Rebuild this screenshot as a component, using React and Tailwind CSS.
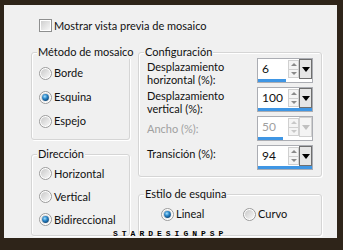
import React from "react";

function Radio({ checked }) {
  return (
    <svg width="13" height="13" viewBox="0 0 13 13" className="shrink-0">
      <defs>
        <linearGradient id="rg" x1="0" y1="0" x2="1" y2="1">
          <stop offset="0" stopColor="#c9c9c9" />
          <stop offset="1" stopColor="#f8f8f8" />
        </linearGradient>
        <radialGradient id="rb" cx="0.4" cy="0.35" r="0.75">
          <stop offset="0" stopColor="#a6e2ff" />
          <stop offset="0.45" stopColor="#2a86c9" />
          <stop offset="1" stopColor="#0a3a66" />
        </radialGradient>
      </defs>
      <circle cx="6.5" cy="6.5" r="6" fill="#ffffff" stroke="#9a9a9a" strokeWidth="1" />
      <circle cx="6.5" cy="6.5" r="4.6" fill="url(#rg)" />
      {checked && <circle cx="6.5" cy="6.5" r="3.4" fill="url(#rb)" />}
    </svg>
  );
}

function Checkbox() {
  return (
    <div className="w-[13px] h-[13px] border border-[#8e8f8f] bg-white p-[1px] shrink-0">
      <div className="w-full h-full bg-gradient-to-br from-[#cfcfcf] to-[#f7f7f7]" />
    </div>
  );
}

function Group({ label, className, children }) {
  return (
    <div className={`relative border border-[#d5d5d5] rounded-[3px] shadow-[inset_1px_1px_0_#ffffff,1px_1px_0_#ffffff] ${className}`}>
      <span className="absolute -top-[8px] left-[5px] bg-[#f0f0f0] px-[1px] leading-[14px] text-[#111] whitespace-nowrap">
        {label}
      </span>
      {children}
    </div>
  );
}

function RadioRow({ checked, label, className }) {
  return (
    <div className={`flex items-center gap-[2px] ${className}`}>
      <Radio checked={checked} />
      <span className="leading-[14px] whitespace-nowrap">{label}</span>
    </div>
  );
}

function SpinBox({ value, barClass, disabled }) {
  return (
    <div className="w-[56px] h-[25px] border border-[#abadb3] bg-white flex flex-col shrink-0">
      <div className="flex flex-1">
        <div className={`flex-1 pl-[4px] leading-[19px] text-[12px] ${disabled ? "text-[#a0a0a0]" : "text-[#111]"}`}>
          {value}
        </div>
        <div className="w-[11px] flex flex-col my-[1px] border border-[#d0d0d0] bg-[#f4f4f4]">
          <div className="flex-1 flex items-center justify-center border-b border-[#d0d0d0]">
            <div className={`w-0 h-0 border-l-[3px] border-r-[3px] border-b-[3px] border-l-transparent border-r-transparent ${disabled ? "border-b-[#c8c8c8]" : "border-b-[#8a8a8a]"}`} />
          </div>
          <div className="flex-1 flex items-center justify-center">
            <div className={`w-0 h-0 border-l-[3px] border-r-[3px] border-t-[3px] border-l-transparent border-r-transparent ${disabled ? "border-t-[#c8c8c8]" : "border-t-[#8a8a8a]"}`} />
          </div>
        </div>
        <div className={`w-[13px] flex items-center justify-center border ${disabled ? "border-[#d0d0d0] bg-[#f4f4f4]" : "border-[#6f6f6f] bg-[#e6e6e6]"}`}>
          <div className={`w-0 h-0 border-l-[4px] border-r-[4px] border-t-[5px] border-l-transparent border-r-transparent ${disabled ? "border-t-[#c0c0c0]" : "border-t-black"}`} />
        </div>
      </div>
      <div className="h-[3px] bg-white">
        <div className={`h-full bg-[#3f96e4] ${barClass}`} />
      </div>
    </div>
  );
}

export default function App() {
  return (
    <div
      className="w-[343px] h-[250px] bg-[#2e2419] pt-[5px] pl-[4px] text-[11px] text-[#111]"
      style={{ fontFamily: "Lato, 'Noto Sans', sans-serif" }}
    >
      <div className="w-[333px] h-[233px] bg-[#f0f0f0] relative flex flex-col">
        <div className="flex items-center gap-[2px] mt-[14px] pl-[35px] h-[13px]">
          <Checkbox />
          <span className="leading-[14px] whitespace-nowrap">Mostrar vista previa de mosaico</span>
        </div>

        <div className="flex gap-[8px] mt-[20px] ml-[27px]">
          <div className="flex flex-col w-[99px]">
            <Group label="Método de mosaico" className="h-[88px] pt-[8px] pl-[7px]">
              <RadioRow label="Borde" className="h-[24px]" />
              <RadioRow label="Esquina" checked className="h-[24px]" />
              <RadioRow label="Espejo" className="h-[24px]" />
            </Group>
            <Group label="Dirección" className="h-[82px] mt-[14px] pt-[7px] pl-[7px]">
              <RadioRow label="Horizontal" className="h-[23px]" />
              <RadioRow label="Vertical" className="h-[23px]" />
              <RadioRow label="Bidireccional" checked className="h-[23px]" />
            </Group>
          </div>

          <div className="flex flex-col w-[184px]">
            <Group label="Configuración" className="h-[125px] pt-[5px] pl-[8px] pr-[8px]">
              <div className="flex justify-between h-[29px]">
                <div className="leading-[13px] pt-[2px] whitespace-nowrap">
                  Desplazamiento
                  <br />
                  horizontal (%):
                </div>
                <SpinBox value="6" barClass="w-[28px]" />
              </div>
              <div className="flex justify-between h-[29px]">
                <div className="leading-[13px] pt-[2px] whitespace-nowrap">
                  Desplazamiento
                  <br />
                  vertical (%):
                </div>
                <SpinBox value="100" barClass="w-full" />
              </div>
              <div className="flex justify-between h-[29px]">
                <div className="leading-[13px] pt-[6px] text-[#a0a0a0] whitespace-nowrap">Ancho (%):</div>
                <SpinBox value="50" barClass="w-[25px]" disabled />
              </div>
              <div className="flex justify-between h-[29px]">
                <div className="leading-[13px] pt-[2px] whitespace-nowrap">Transición (%):</div>
                <SpinBox value="94" barClass="w-full" />
              </div>
            </Group>
            <Group label="Estilo de esquina" className="h-[42px] mt-[17px] pt-[12px] pl-[22px]">
              <div className="flex h-[14px]">
                <RadioRow label="Lineal" checked className="w-[82px]" />
                <RadioRow label="Curvo" />
              </div>
            </Group>
          </div>
        </div>

        <div
          className="absolute left-[109px] top-[225px] text-[8px] leading-[8px] font-bold tracking-[4px] text-black whitespace-nowrap"
          style={{ fontFamily: "'Liberation Mono', monospace" }}
        >
          STARDESIGNPSP
        </div>
      </div>
    </div>
  );
}
